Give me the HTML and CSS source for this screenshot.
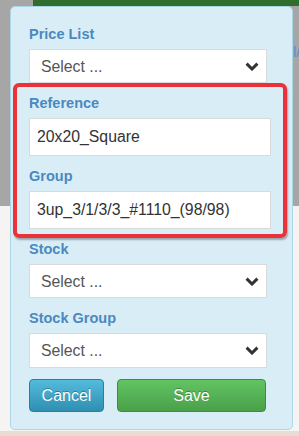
FILE: index.html
```html
<!DOCTYPE html>
<html lang="en">
<head>
    <meta charset="UTF-8">
    <title>Filter</title>
    <link rel="stylesheet" href="styles.css">
</head>
<body>

<div class="topbar"></div>
<span class="peek">l/</span>

<div class="panel">
    <form class="filter">
        <label for="pricelist">Price List</label>
        <select id="pricelist" class="sel">
            <option>Select ...</option>
        </select>

        <label for="reference">Reference</label>
        <input type="text" id="reference" value="20x20_Square">

        <label for="group">Group</label>
        <input type="text" id="group" value="3up_3/1/3/3_#1110_(98/98)">

        <label for="stock">Stock</label>
        <select id="stock" class="sel">
            <option>Select ...</option>
        </select>

        <label for="stockgroup">Stock Group</label>
        <select id="stockgroup" class="sel">
            <option>Select ...</option>
        </select>

        <div class="actions">
            <button type="button" class="btn btn-cancel">Cancel</button>
            <button type="submit" class="btn btn-save">Save</button>
        </div>
    </form>

    <div class="highlight"></div>
</div>

</body>
</html>
```

FILE: styles.css
```css
body {
    margin: 0;
    width: 299px;
    height: 436px;
    overflow: hidden;
    position: relative;
    font-family: "Liberation Sans", Arial, sans-serif;
    background: linear-gradient(#a6a6a6 0, #a6a6a6 206px, #f5f4f2 206px, #f5f4f2 431px, #e9dcd3 431px);
}
.topbar {
    height: 6px;
    margin-left: 33px;
    background: #2f6e2c;
}
.peek {
    position: absolute;
    left: 293px;
    top: 43px;
    font-size: 15px;
    color: #5b8fc0;
}
.panel {
    position: relative;
    margin: 0 6px 0 10px;
    height: 422px;
    background: #d9edf7;
    border: 1px solid #acd6e6;
    border-radius: 5px;
}
.filter {
    display: flex;
    flex-direction: column;
    padding: 19px 21px 0 18px;
}
label {
    display: block;
    font-size: 14.5px;
    line-height: 17px;
    font-weight: bold;
    color: #4a89bf;
    margin-top: 12px;
}
label:first-child {
    margin-top: 0;
}
input, select {
    box-sizing: border-box;
    margin-top: 6px;
    font-family: "Liberation Sans", Arial, sans-serif;
    font-size: 15.8px;
    background-color: #fff;
    border: 1px solid #dadada;
    border-radius: 0;
    outline: none;
}
input {
    width: 100%;
    height: 38px;
    padding: 0 7px;
    color: #333;
}
.sel {
    width: calc(100% - 4px);
    height: 34px;
    padding: 0 30px 0 11px;
    color: #555;
    appearance: none;
    -webkit-appearance: none;
    background-image: url("data:image/svg+xml,%3Csvg xmlns='http://www.w3.org/2000/svg' width='14' height='9' viewBox='0 0 14 9'%3E%3Cpath d='M1.6 1.6 7 7 12.4 1.6' fill='none' stroke='%23333' stroke-width='3'/%3E%3C/svg%3E");
    background-repeat: no-repeat;
    background-position: right 7px center;
    background-size: 14px 9px;
}
#stockgroup {
    height: 35px;
}
.actions {
    display: flex;
    gap: 13px;
    margin-top: 11px;
}
.btn {
    height: 33px;
    font-family: "Liberation Sans", Arial, sans-serif;
    font-size: 16px;
    color: #fff;
    text-shadow: 0 -1px 0 rgba(0,0,0,0.3);
    border-radius: 4px;
    cursor: pointer;
    padding: 0;
}
.btn-cancel {
    width: 75px;
    background: linear-gradient(#54bbdc, #2e8fb1);
    border: 1px solid #2a7f9d;
}
.btn-save {
    width: 149px;
    background: linear-gradient(#62c462, #4aa04a);
    border: 1px solid #3f8c3f;
}
.highlight {
    position: absolute;
    left: 2px;
    top: 76px;
    width: 274px;
    height: 155px;
    box-sizing: border-box;
    border: 4px solid #e9323a;
    border-radius: 6px;
    box-shadow: 1px 2px 2px rgba(0,0,0,0.3);
    pointer-events: none;
}
```
